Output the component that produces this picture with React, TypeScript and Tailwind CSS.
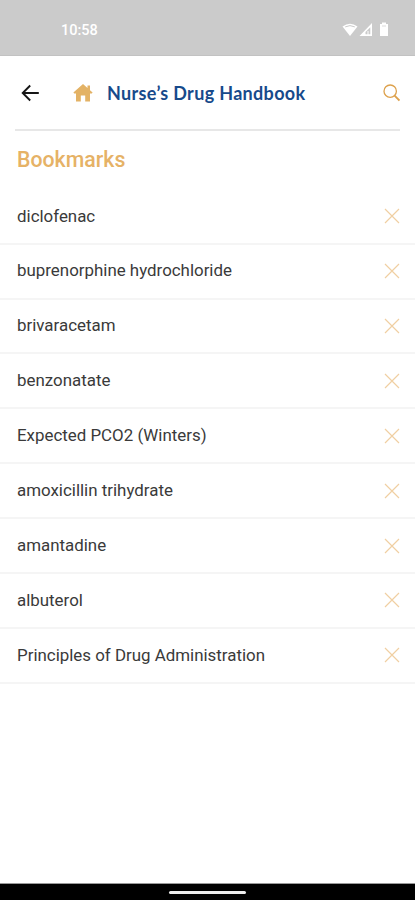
const bookmarks = [
  "diclofenac",
  "buprenorphine hydrochloride",
  "brivaracetam",
  "benzonatate",
  "Expected PCO2 (Winters)",
  "amoxicillin trihydrate",
  "amantadine",
  "albuterol",
  "Principles of Drug Administration",
];

function StatusBar() {
  return (
    <div className="flex h-14 shrink-0 justify-between border-b border-[#c2c2c2] bg-[#cbcbcb] pt-[21px] pr-[26px] pl-[61px] text-white">
      <span className="font-['Roboto',sans-serif] text-[14.5px] leading-5 font-medium">10:58</span>
      <div className="flex pt-px">
        <svg width="16" height="15" viewBox="0 0 16 15" fill="none">
          <path d="M0.5 4.5Q8 -1 15.5 4.5L8 14Z" fill="currentColor" />
          <path d="M3.2 4.9Q8 2.3 12.8 4.9" stroke="#cbcbcb" strokeWidth="1" />
        </svg>
        <svg className="ml-px" width="14" height="15" viewBox="0 0 14 15">
          <path d="M0.5 14L13 1V14ZM6.5 12.3H11.3V5.2L6.5 10Z" fill="currentColor" fillRule="evenodd" />
          <path d="M9 9V13" stroke="currentColor" strokeWidth="1" />
        </svg>
        <svg className="ml-[6px]" width="10" height="15" viewBox="0 0 10 15" fill="currentColor">
          <path d="M3 0.5H7V2H9V14H1V2H3Z" />
          <path d="M3 4H7" stroke="#cbcbcb" strokeWidth="0.7" />
        </svg>
      </div>
    </div>
  );
}

function Header() {
  return (
    <header className="mr-[15px] ml-[15px] flex h-[75px] shrink-0 items-center border-b-2 border-[#e7e7e7]">
      <button className="ml-[6px]" aria-label="Back">
        <svg width="18" height="18" viewBox="0 0 18 18" fill="none" stroke="#161616" strokeWidth="1.9">
          <path d="M17.8 9H2M9.2 1.5L1.7 9L9.2 16.5" />
        </svg>
      </button>
      <button className="ml-[34px]" aria-label="Home">
        <svg width="20" height="20" viewBox="0 0 20 20" fill="#e3b265">
          <path d="M10 1L14.5 5V2.5H17V7.2L19.6 9.5L18.8 10.5H17V18.5H12.2V12.5H7.8V18.5H3V10.5H1.2L0.4 9.5Z" />
        </svg>
      </button>
      <h1 className="ml-[14px] font-['Lato',sans-serif] text-[18px] leading-6 font-bold tracking-[0.33px] whitespace-nowrap text-[#174a8b]">
        Nurse’s Drug Handbook
      </h1>
      <button className="ml-auto" aria-label="Search">
        <svg width="17" height="18" viewBox="0 0 17 18" fill="none" stroke="#dda14c">
          <circle cx="7.2" cy="7.2" r="6.2" strokeWidth="1.3" />
          <path d="M11.6 11.6L16.5 16.5" strokeWidth="1.9" />
        </svg>
      </button>
    </header>
  );
}

export default function App() {
  return (
    <div className="flex h-[900px] w-[415px] flex-col overflow-hidden bg-white">
      <StatusBar />
      <Header />
      <main className="flex-1">
        <h2 className="flex h-[58.8px] items-center pl-[17px] font-['Roboto',sans-serif] text-[21.3px] leading-6 font-medium text-[#e6b266]">
          Bookmarks
        </h2>
        <ul className="font-['Roboto',sans-serif] text-[16.9px] text-[#3a3a3a]">
          {bookmarks.map((name) => (
            <li
              key={name}
              className="flex h-[54.9px] items-center justify-between border-b-2 border-[#f5f5f5] pr-[15px] pl-[17px]"
            >
              <span>{name}</span>
              <button aria-label="Remove">
                <svg width="16" height="16" viewBox="0 0 16 16" fill="none" stroke="#f0cfa2" strokeWidth="1.2">
                  <path d="M1 1L15 15M15 1L1 15" />
                </svg>
              </button>
            </li>
          ))}
        </ul>
      </main>
      <div className="flex h-[17px] shrink-0 justify-center border-t border-[#999999] bg-black pt-[7px]">
        <div className="h-[3px] w-[77px] rounded-full bg-[#eeeeee]" />
      </div>
    </div>
  );
}
